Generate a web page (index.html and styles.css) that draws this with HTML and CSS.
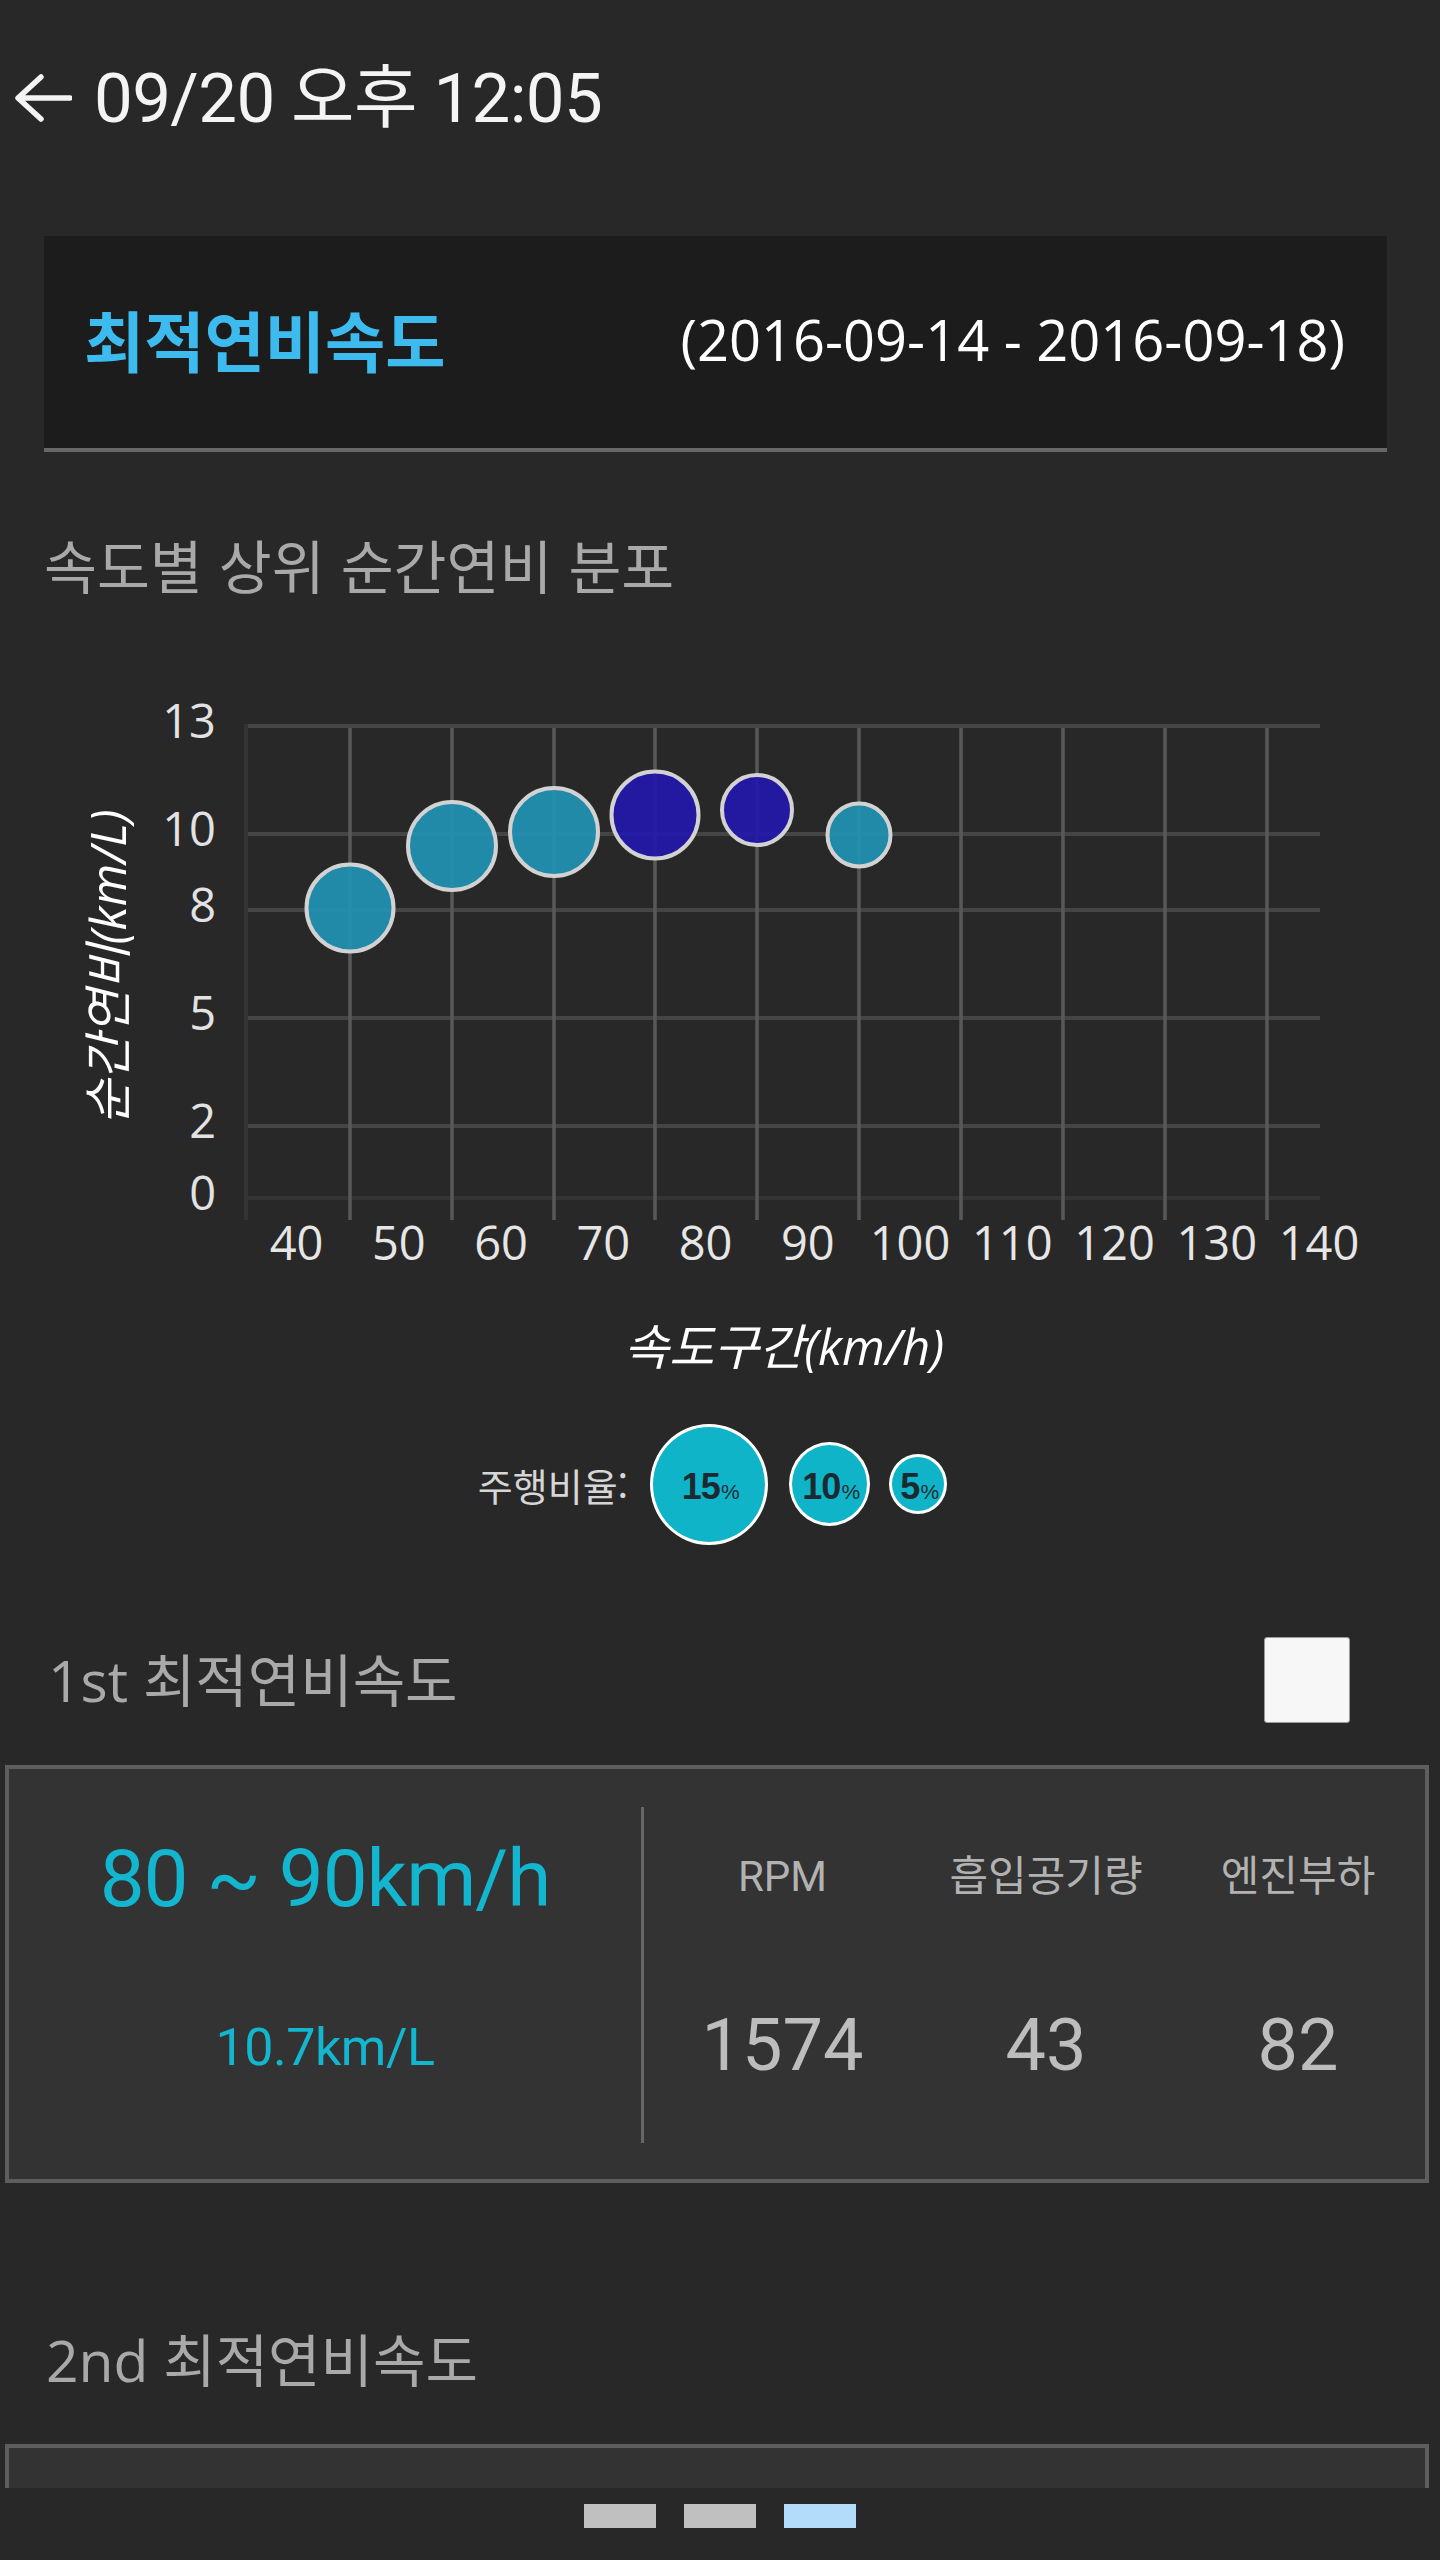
FILE: index.html
```html
<!DOCTYPE html>
<html lang="ko">
<head>
<meta charset="utf-8">
<title>최적연비속도</title>
<link rel="stylesheet" href="styles.css">
</head>
<body>
<header class="topbar">
  <svg class="back" viewBox="0 0 58 48" aria-hidden="true">
    <path d="M56 24 H5 M27 3 L4 24 L27 45" fill="none" stroke="#f4f4f4" stroke-width="5.5" stroke-linecap="round" stroke-linejoin="round"/>
  </svg>
  <h1 class="top-title">09/20 오후 12:05</h1>
</header>

<section class="period">
  <h2 class="period-title">최적연비속도</h2>
  <span class="period-range">(2016-09-14 - 2016-09-18)</span>
</section>

<h3 class="section-title">속도별 상위 순간연비 분포</h3>

<svg class="chart" width="1440" height="820" viewBox="0 600 1440 820">
  <g class="hgrid">
    <line x1="248" y1="726" x2="1320" y2="726"/>
    <line x1="248" y1="834" x2="1320" y2="834"/>
    <line x1="248" y1="910" x2="1320" y2="910"/>
    <line x1="248" y1="1018" x2="1320" y2="1018"/>
    <line x1="248" y1="1126" x2="1320" y2="1126"/>
  </g>
  <line class="axis" x1="248" y1="1198" x2="1320" y2="1198"/>
  <line class="axis" x1="246" y1="724" x2="246" y2="1220"/>
  <g class="vgrid">
    <line x1="350" y1="728" x2="350" y2="1220"/>
    <line x1="452" y1="728" x2="452" y2="1220"/>
    <line x1="554" y1="728" x2="554" y2="1220"/>
    <line x1="655" y1="728" x2="655" y2="1220"/>
    <line x1="757" y1="728" x2="757" y2="1220"/>
    <line x1="859" y1="728" x2="859" y2="1220"/>
    <line x1="961" y1="728" x2="961" y2="1220"/>
    <line x1="1063" y1="728" x2="1063" y2="1220"/>
    <line x1="1165" y1="728" x2="1165" y2="1220"/>
    <line x1="1267" y1="728" x2="1267" y2="1220"/>
  </g>
  <g class="ytick">
    <text x="216" y="738">13</text>
    <text x="216" y="846">10</text>
    <text x="216" y="922">8</text>
    <text x="216" y="1030">5</text>
    <text x="216" y="1138">2</text>
    <text x="216" y="1210">0</text>
  </g>
  <g class="xtick">
    <text x="296.5" y="1260">40</text>
    <text x="398.8" y="1260">50</text>
    <text x="501" y="1260">60</text>
    <text x="603.3" y="1260">70</text>
    <text x="705.5" y="1260">80</text>
    <text x="807.8" y="1260">90</text>
    <text x="910" y="1260">100</text>
    <text x="1012.3" y="1260">110</text>
    <text x="1114.5" y="1260">120</text>
    <text x="1216.8" y="1260">130</text>
    <text x="1319" y="1260">140</text>
  </g>
  <text class="axis-title" transform="translate(126 967) rotate(-90)">순간연비(km/L)</text>
  <text class="axis-title" x="784" y="1365">속도구간(km/h)</text>
  <g class="bubbles">
    <circle class="teal" cx="350" cy="908" r="43.5"/>
    <circle class="teal" cx="452" cy="846" r="44"/>
    <circle class="teal" cx="554" cy="832" r="44"/>
    <circle class="violet" cx="655" cy="815" r="43.5"/>
    <circle class="violet" cx="757" cy="810" r="35"/>
    <circle class="teal" cx="859" cy="835" r="31.5"/>
  </g>
</svg>

<div class="legend">
  <span class="legend-label">주행비율:</span>
  <span class="dot dot-lg"><b>15</b><small>%</small></span>
  <span class="dot dot-md"><b>10</b><small>%</small></span>
  <span class="dot dot-sm"><b>5</b><small>%</small></span>
</div>

<div class="rank-row">
  <h3 class="rank-title">1st 최적연비속도</h3>
  <span class="checkbox"></span>
</div>

<div class="rank-card">
  <div class="speed-col">
    <div class="speed">80 ~ 90km/h</div>
    <div class="economy">10.7km/L</div>
  </div>
  <div class="divider"></div>
  <div class="metrics">
    <div class="metric"><div class="metric-label">RPM</div><div class="metric-value">1574</div></div>
    <div class="metric"><div class="metric-label">흡입공기량</div><div class="metric-value">43</div></div>
    <div class="metric"><div class="metric-label">엔진부하</div><div class="metric-value">82</div></div>
  </div>
</div>

<h3 class="rank-title second">2nd 최적연비속도</h3>
<div class="rank-card short"></div>

<nav class="pager">
  <span class="page"></span>
  <span class="page"></span>
  <span class="page active"></span>
</nav>
</body>
</html>
```

FILE: styles.css
```css
html, body {
  margin: 0;
  padding: 0;
}
body {
  background: #282828;
  width: 1440px;
  height: 2560px;
  overflow: hidden;
  font-family: "Open Sans", "Noto Sans CJK KR", sans-serif;
}

.topbar {
  height: 196px;
  display: flex;
  align-items: center;
  padding-left: 14px;
}
.back {
  width: 58px;
  height: 48px;
  flex: none;
}
.top-title {
  margin: 0 0 0 22px;
  font-family: Roboto, "Noto Sans CJK KR", sans-serif;
  font-weight: 400;
  font-size: 69px;
  letter-spacing: -0.6px;
  line-height: 1;
  color: #f4f4f4;
}

.period {
  box-sizing: border-box;
  margin: 40px 53px 0 44px;
  height: 216px;
  background: #1c1c1c;
  border-bottom: 4px solid #676767;
  display: flex;
  align-items: center;
  justify-content: space-between;
  padding: 0 42px 6px 40px;
}
.period-title {
  margin: 0;
  font-family: "Noto Sans CJK KR", sans-serif;
  font-weight: 700;
  font-size: 65.5px;
  line-height: 1;
  color: #3dbbee;
}
.period-range {
  font-family: "Open Sans", sans-serif;
  font-size: 56px;
  line-height: 1;
  color: #ffffff;
}

.section-title {
  margin: 76px 0 0 44px;
  font-family: "Noto Sans CJK KR", sans-serif;
  font-weight: 400;
  font-size: 57.5px;
  line-height: 72px;
  color: #a9a9a9;
}

.chart {
  display: block;
}
.hgrid line {
  stroke: #454545;
  stroke-width: 4;
}
.axis {
  stroke: #343434;
  stroke-width: 4;
}
.vgrid line {
  stroke: #585858;
  stroke-width: 3.5;
}
.ytick text {
  font-family: "Open Sans", sans-serif;
  font-size: 47px;
  fill: #e2e2e2;
  text-anchor: end;
}
.xtick text {
  font-family: "Open Sans", sans-serif;
  font-size: 47px;
  fill: #e6e6e6;
  text-anchor: middle;
}
.axis-title {
  font-family: "Open Sans", "Noto Sans CJK KR", sans-serif;
  font-style: italic;
  font-size: 49px;
  fill: #ffffff;
  text-anchor: middle;
}
.bubbles circle {
  stroke: #d2d2d2;
  stroke-width: 4;
}
.bubbles .teal {
  fill: rgba(33, 146, 180, 0.93);
}
.bubbles .violet {
  fill: rgba(36, 24, 170, 0.93);
}

.legend {
  height: 128px;
  display: flex;
  align-items: center;
  justify-content: center;
  padding-right: 15px;
}
.legend-label {
  font-family: "Noto Sans CJK KR", sans-serif;
  font-size: 38px;
  color: #d6d6d6;
  margin-right: 22px;
}
.dot {
  box-sizing: border-box;
  display: flex;
  flex-wrap: wrap;
  align-content: center;
  align-items: baseline;
  justify-content: center;
  padding-top: 6px;
  padding-left: 3px;
  border: 3px solid #ffffff;
  border-radius: 50%;
  background: #10b4c9;
  font-family: "Liberation Sans", Arial, sans-serif;
  color: #1b2a30;
}
.dot b {
  font-size: 36px;
  font-weight: 700;
  line-height: 1;
  letter-spacing: -1px;
}
.dot small {
  font-size: 21px;
  line-height: 1;
  margin-left: 1px;
}
.dot-lg {
  width: 118px;
  height: 121px;
}
.dot-md {
  width: 81px;
  height: 84px;
  margin-left: 21px;
}
.dot-sm {
  width: 58px;
  height: 60px;
  margin-left: 19px;
}

.rank-row {
  height: 100px;
  margin-top: 82px;
  padding: 0 90px 0 48px;
  display: flex;
  align-items: center;
  justify-content: space-between;
}
.rank-title {
  margin: 0;
  font-family: "Open Sans", "Noto Sans CJK KR", sans-serif;
  font-weight: 400;
  font-size: 57px;
  line-height: 72px;
  color: #a9a9a9;
}
.rank-title.second {
  margin: 141px 0 0 46px;
}
.checkbox {
  width: 86px;
  height: 86px;
  box-sizing: border-box;
  background: #f7f7f7;
  border: 1px solid #9a9a9a;
  border-radius: 3px;
}

.rank-card {
  box-sizing: border-box;
  margin: 35px 11px 0 5px;
  height: 418px;
  background: #333333;
  border: 4px solid #5e5e5e;
  display: flex;
}
.rank-card.short {
  margin-top: 48px;
  height: 116px;
  border-bottom: none;
}
.speed-col {
  width: 632px;
  flex: none;
  text-align: center;
  padding-top: 60px;
  font-family: Roboto, sans-serif;
  color: #12b6cf;
}
.speed {
  font-size: 80px;
  line-height: 100px;
  letter-spacing: -1px;
}
.economy {
  margin-top: 79px;
  font-size: 52px;
  line-height: 80px;
  letter-spacing: -0.5px;
}
.divider {
  width: 3px;
  flex: none;
  margin: 38px 0 36px;
  background: #666666;
}
.metrics {
  flex: 1;
  display: grid;
  grid-template-columns: 277px 250px 1fr;
}
.metric {
  text-align: center;
  padding-top: 78px;
  font-family: Roboto, "Noto Sans CJK KR", sans-serif;
}
.metric-label {
  font-size: 42px;
  line-height: 60px;
  color: #b2b2b2;
}
.metric-value {
  margin-top: 94px;
  font-size: 72px;
  line-height: 90px;
  color: #bdbdbd;
}

.pager {
  position: fixed;
  left: 0;
  bottom: 0;
  width: 1440px;
  height: 72px;
  box-sizing: border-box;
  padding-top: 16px;
  background: #282828;
  display: flex;
  justify-content: center;
  align-items: flex-start;
  gap: 28px;
}
.page {
  width: 72px;
  height: 24px;
  background: #c0c0c0;
}
.page.active {
  background: #b3dbfa;
}
```
